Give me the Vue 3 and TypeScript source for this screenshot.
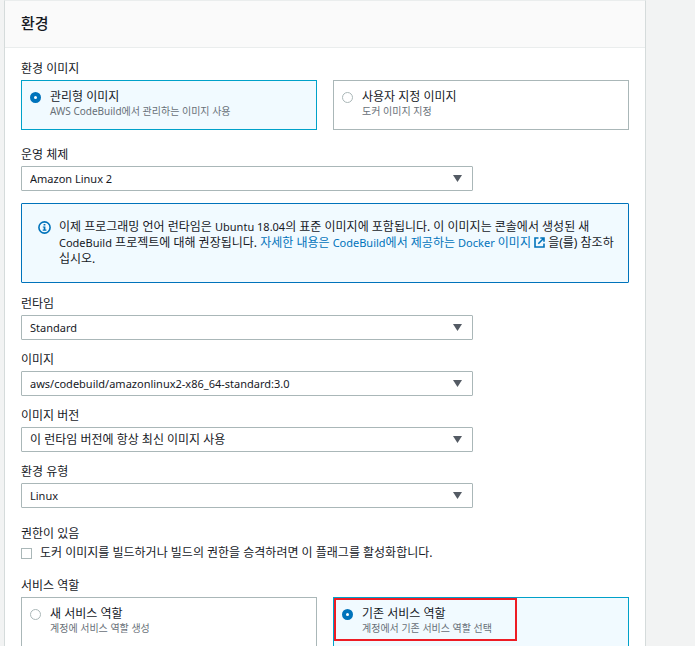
<script setup lang="ts">
import { ref } from 'vue'

interface SelectField {
  id: string
  label: string
  value: string
  korean?: boolean
}

interface Choice {
  value: string
  title: string
  description: string
}

const osField: SelectField = { id: 'os', label: '운영 체제', value: 'Amazon Linux 2' }

const runtimeFields: SelectField[] = [
  { id: 'runtime', label: '런타임', value: 'Standard' },
  { id: 'image', label: '이미지', value: 'aws/codebuild/amazonlinux2-x86_64-standard:3.0' },
  { id: 'version', label: '이미지 버전', value: '이 런타임 버전에 항상 최신 이미지 사용', korean: true },
  { id: 'env-type', label: '환경 유형', value: 'Linux' },
]

const imageChoices: Choice[] = [
  { value: 'managed', title: '관리형 이미지', description: 'AWS CodeBuild에서 관리하는 이미지 사용' },
  { value: 'custom', title: '사용자 지정 이미지', description: '도커 이미지 지정' },
]

const roleChoices: Choice[] = [
  { value: 'new', title: '새 서비스 역할', description: '계정에 서비스 역할 생성' },
  { value: 'existing', title: '기존 서비스 역할', description: '계정에서 기존 서비스 역할 선택' },
]

const imageKind = ref('managed')
const roleKind = ref('existing')
const privileged = ref(false)
</script>

<template>
  <main class="page">
    <section class="card">
      <header class="card-header">
        <h2>환경</h2>
      </header>
      <div class="card-body">
        <fieldset class="group">
          <legend class="label">환경 이미지</legend>
          <div class="tiles">
            <label v-for="c in imageChoices" :key="c.value" class="tile" :class="{ selected: imageKind === c.value }">
              <input v-model="imageKind" type="radio" name="image-kind" :value="c.value" />
              <span class="tile-text">
                <span class="tile-title">{{ c.title }}</span>
                <span class="tile-desc">{{ c.description }}</span>
              </span>
            </label>
          </div>
        </fieldset>

        <div class="field">
          <label class="label" :for="osField.id">{{ osField.label }}</label>
          <div class="select">
            <select :id="osField.id">
              <option>{{ osField.value }}</option>
            </select>
            <svg class="caret" viewBox="0 0 9 7" aria-hidden="true"><path d="M0 0h9L4.5 7z" /></svg>
          </div>
        </div>

        <div class="info">
          <svg class="info-icon" viewBox="0 0 13 13" aria-hidden="true">
            <circle cx="6.5" cy="6.5" r="5.6" fill="none" stroke="currentColor" stroke-width="1.6" />
            <path d="M5.6 2.9h1.8v1.6H5.6zM4.8 5.4h2.6v3.2h1v1.2H4.7V8.6h1V6.6h-.9z" fill="currentColor" />
          </svg>
          <p>
            이제 프로그래밍 언어 런타임은 <span class="latin">Ubuntu 18.04</span>의 표준 이미지에 포함됩니다. 이 이미지는 콘솔에서 생성된 새
            <span class="latin">CodeBuild</span> 프로젝트에 대해 권장됩니다.
            <a href="#">자세한 내용은 <span class="latin">CodeBuild</span>에서 제공하는 <span class="latin">Docker</span> 이미지
              <svg class="link-icon" viewBox="0 0 11 11" aria-hidden="true">
                <path d="M4.5 1H1v9h9V6.5M6.3 1H10v3.7M10 1L4.3 6.7" fill="none" stroke="currentColor" stroke-width="1.6" />
              </svg></a>
            을(를) 참조하십시오.
          </p>
        </div>

        <div class="stack">
          <div v-for="f in runtimeFields" :key="f.id" class="field">
            <label class="label" :for="f.id">{{ f.label }}</label>
            <div class="select">
              <select :id="f.id" :class="{ korean: f.korean }">
                <option>{{ f.value }}</option>
              </select>
              <svg class="caret" viewBox="0 0 9 7" aria-hidden="true"><path d="M0 0h9L4.5 7z" /></svg>
            </div>
          </div>
        </div>

        <fieldset class="group privilege">
          <legend class="label">권한이 있음</legend>
          <label class="check">
            <input v-model="privileged" type="checkbox" />
            <span>도커 이미지를 빌드하거나 빌드의 권한을 승격하려면 이 플래그를 활성화합니다.</span>
          </label>
        </fieldset>

        <fieldset class="group">
          <legend class="label">서비스 역할</legend>
          <div class="tiles">
            <label v-for="c in roleChoices" :key="c.value" class="tile" :class="{ selected: roleKind === c.value }">
              <input v-model="roleKind" type="radio" name="role-kind" :value="c.value" />
              <span class="tile-text">
                <span class="tile-title">{{ c.title }}</span>
                <span class="tile-desc">{{ c.description }}</span>
              </span>
              <span v-if="c.value === 'existing'" class="highlight" aria-hidden="true"></span>
            </label>
          </div>
        </fieldset>
      </div>
    </section>
  </main>
</template>

<style>
body {
  background: #f2f3f3;
}
</style>

<style scoped>
* {
  box-sizing: border-box;
}

.page {
  padding: 0 49px 0 4px;
  font-family: 'Noto Sans', 'Noto Sans CJK KR', sans-serif;
  font-size: 12px;
  line-height: 16px;
  color: #16191f;
}

.card {
  background: #fff;
  border: 1px solid #d5dbdb;
  border-top-color: #eaeded;
  border-bottom: 0;
}

.card-header {
  padding: 10px 16px 12px;
  background: #fafafa;
  border-bottom: 1px solid #eaeded;
}

h2 {
  margin: 0;
  font-size: 15px;
  line-height: 24px;
  font-weight: 500;
}

.card-body {
  padding: 12px 16px 0;
}

.group {
  min-width: 0;
  margin: 0 0 16px;
  padding: 0;
  border: 0;
}

.group:last-child {
  margin-bottom: 0;
}

.label {
  display: block;
  margin-bottom: 3px;
  padding: 1px 0 0;
}

.tiles {
  display: grid;
  grid-template-columns: 1fr 1fr;
  gap: 16px;
}

.tile {
  position: relative;
  display: flex;
  gap: 9px;
  padding: 8px 8px 12px;
  border: 1px solid #aab7b8;
  background: #fff;
}

.tile.selected {
  border-color: #00a1c9;
  background: #f1faff;
}

.tile input {
  appearance: none;
  flex: none;
  width: 11px;
  height: 11px;
  margin: 3px 0 0;
  border: 1px solid #aab7b8;
  border-radius: 50%;
  background: #fff;
}

.tile input:checked {
  border: 4px solid #0073bb;
}

.tile-text {
  display: flex;
  flex-direction: column;
}

.tile-desc {
  font-size: 10px;
  line-height: 12px;
  color: #687078;
}

.highlight {
  position: absolute;
  top: 0;
  left: 0;
  width: 183px;
  height: 43px;
  border: 2px solid #ed1c24;
}

.select {
  position: relative;
  width: calc(75% - 4px);
}

select {
  appearance: none;
  display: block;
  width: 100%;
  height: 25px;
  padding: 0 28px 0 8px;
  border: 1px solid #aab7b8;
  border-radius: 1px;
  background: #fff;
  font-family: inherit;
  font-size: 11px;
  color: #16191f;
}

select.korean {
  font-size: 12px;
}

.caret {
  position: absolute;
  top: 9px;
  right: 11px;
  width: 9px;
  height: 7px;
  fill: #545b64;
  pointer-events: none;
}

.info {
  display: flex;
  gap: 8px;
  margin: 12px 0;
  padding: 15px 12px 15px 16px;
  border: 1px solid #0073bb;
  border-radius: 1px;
  background: #f1faff;
}

.info p {
  margin: 0;
}

.info-icon {
  flex: none;
  width: 13px;
  height: 13px;
  margin-top: 2px;
  color: #0073bb;
}

.latin {
  font-size: 11px;
}

a {
  color: #0073bb;
  text-decoration: none;
}

.link-icon {
  width: 11px;
  height: 11px;
  vertical-align: -1px;
}

.stack {
  display: flex;
  flex-direction: column;
  gap: 11px;
}

.privilege {
  margin-top: 17px;
}

.check {
  display: flex;
  align-items: center;
  gap: 8px;
}

.check input {
  appearance: none;
  flex: none;
  width: 11px;
  height: 11px;
  margin: 0;
  border: 1px solid #aab7b8;
  background: #fff;
}

.check input:checked {
  background: #0073bb;
}
</style>
